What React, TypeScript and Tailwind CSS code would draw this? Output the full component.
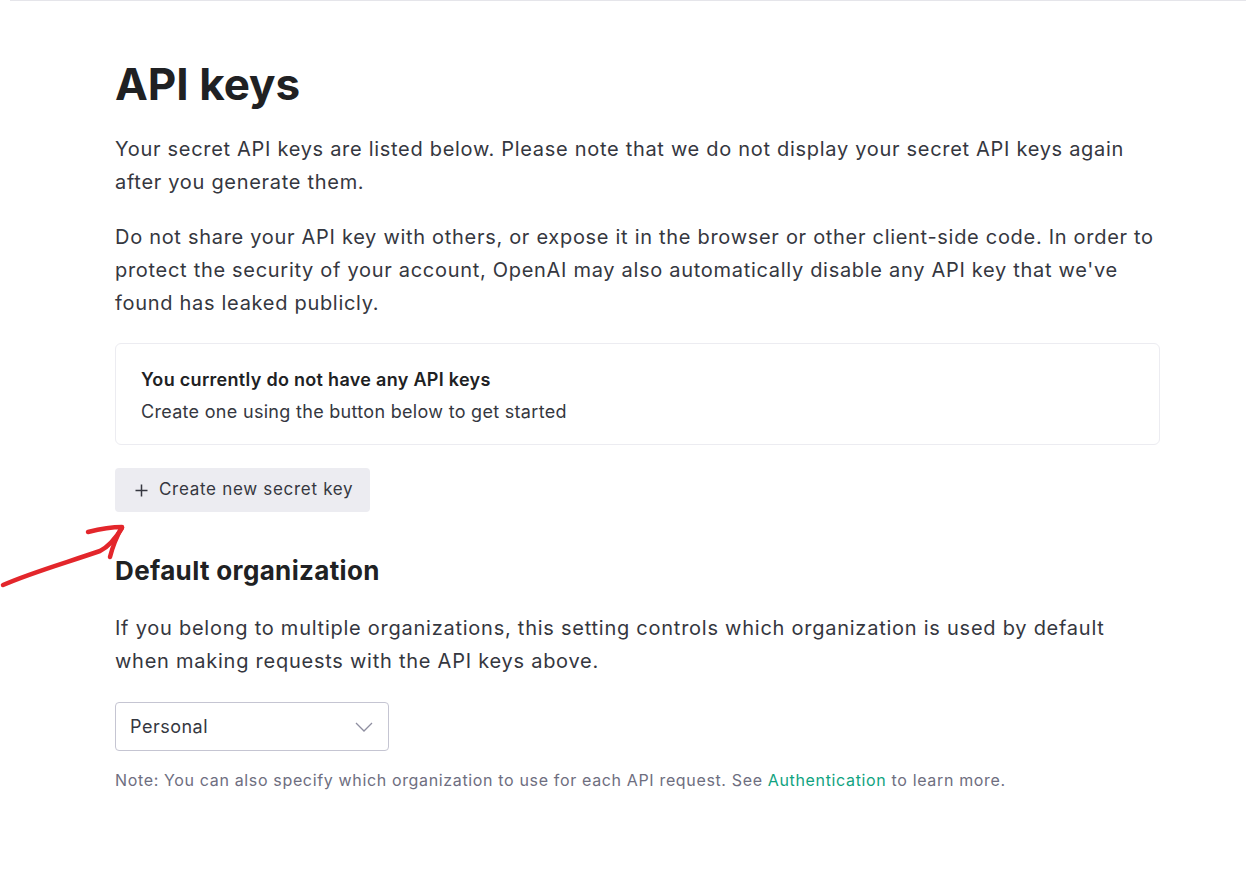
import React from 'react';

export default function App() {
  return (
    <div className="relative min-h-[873px] bg-white font-['Inter',sans-serif] text-[#353740]">
      {/* top divider */}
      <div className="ml-[10px] h-[2px] border-t border-[#e5e5ea]" />

      {/* hand-drawn arrow pointing at the button */}
      <svg
        className="absolute left-0 top-[515px]"
        width="130"
        height="80"
        viewBox="0 0 130 80"
        fill="none"
      >
        <path
          d="M3 70 C 30 58, 62 49, 100 36 C 108 32, 114 26, 122 13"
          stroke="#e3262b"
          strokeWidth="4.5"
          strokeLinecap="round"
        />
        <path
          d="M88 17 C 100 14, 111 12, 122 12 C 117 21, 113 30, 110 42"
          stroke="#e3262b"
          strokeWidth="4.5"
          strokeLinecap="round"
          strokeLinejoin="round"
        />
      </svg>

      <div className="ml-[115px] w-[1045px] pt-[56px]">
        <h1 className="text-[44px] font-bold leading-[52px] text-[#202123]">API keys</h1>

        <p className="mt-[23px] whitespace-nowrap text-[20px] leading-[33px] tracking-[0.7px]">
          Your secret API keys are listed below. Please note that we do not display your secret API keys again
          <br />
          after you generate them.
        </p>
        <p className="mt-[22px] whitespace-nowrap text-[20px] leading-[33px] tracking-[0.7px]">
          Do not share your API key with others, or expose it in the browser or other client-side code. In order to
          <br />
          protect the security of your account, OpenAI may also automatically disable any API key that we've
          <br />
          found has leaked publicly.
        </p>

        <div className="mt-[23px] rounded-[6px] border border-[#ececf1] px-[25px] pt-[24px] pb-[20px]">
          <div className="text-[18px] font-semibold leading-[24px] tracking-[0.3px] text-[#202123]">
            You currently do not have any API keys
          </div>
          <div className="mt-[8px] text-[18px] leading-[24px] tracking-[0.3px]">
            Create one using the button below to get started
          </div>
        </div>

        <button className="mt-[23px] flex h-[44px] items-center gap-[11px] rounded-[4px] bg-[#ececf1] pl-[20px] pr-[17px] text-[17px] tracking-[0.7px] text-[#353740]">
          <svg width="13" height="13" viewBox="0 0 13 13" fill="none">
            <path d="M6.5 0.5V12.5M0.5 6.5H12.5" stroke="#353740" strokeWidth="1.5" />
          </svg>
          <span>Create new secret key</span>
        </button>

        <h2 className="mt-[41px] text-[26px] font-bold leading-[36px] tracking-[0.35px] text-[#202123]">
          Default organization
        </h2>

        <p className="mt-[23px] whitespace-nowrap text-[20px] leading-[33px] tracking-[0.75px]">
          If you belong to multiple organizations, this setting controls which organization is used by default
          <br />
          when making requests with the API keys above.
        </p>

        <div className="mt-[24px] flex h-[49px] w-[274px] items-center justify-between rounded-[4px] border border-[#c5c5d2] pl-[14px] pr-[15px]">
          <span className="text-[18px] tracking-[0.5px] text-[#353740]">Personal</span>
          <svg width="18" height="10" viewBox="0 0 18 10" fill="none">
            <path d="M1 1L9 9L17 1" stroke="#8e8ea0" strokeWidth="1.25" />
          </svg>
        </div>

        <p className="mt-[17px] text-[16px] leading-[24px] tracking-[0.65px] text-[#6e6e80]">
          Note: You can also specify which organization to use for each API request. See{' '}
          <a className="text-[#10a37f]">Authentication</a> to learn more.
        </p>
      </div>
    </div>
  );
}
